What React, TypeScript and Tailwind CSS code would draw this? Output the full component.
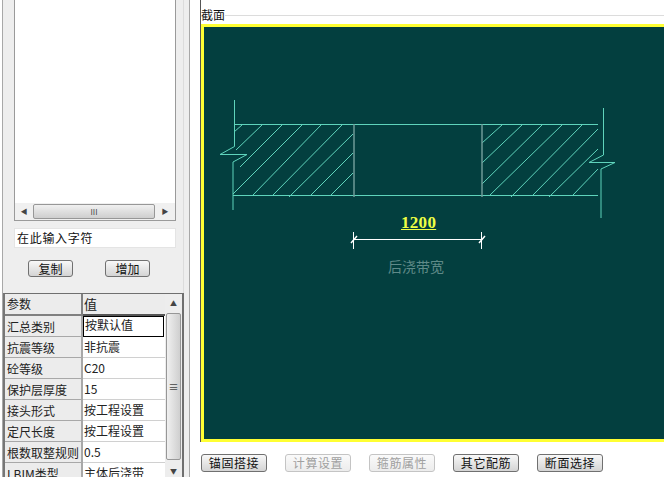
const font = "font-['Noto_Sans_CJK_SC','Liberation_Sans',sans-serif]";

const rows = [
  ["汇总类别", "按默认值"],
  ["抗震等级", "非抗震"],
  ["砼等级", "C20"],
  ["保护层厚度", "15"],
  ["接头形式", "按工程设置"],
  ["定尺长度", "按工程设置"],
  ["根数取整规则", "0.5"],
  ["LBIM类型", "主体后浇带"],
];

const teal = "#5fd4bc";

function Btn({ label, off, small }: { label: string; off?: boolean; small?: boolean }) {
  return (
    <button
      className={`shrink-0 rounded-[3px] border text-[12px] leading-none bg-gradient-to-b ${
        small ? "w-[45px] h-[17px]" : "w-[66px] h-[18px] tracking-[0.6px]"
      } ${off ? "border-[#c4c4c4] text-[#a0a0a0] from-[#fafafa] to-[#ececec]" : "border-[#707070] text-[#111] from-[#f8f8f8] to-[#d4d4d4]"}`}
    >
      {label}
    </button>
  );
}

function Section() {
  // hatching, left and right halves of the slab
  const hatch = [
    [234, 132, 242, 125], [236, 150, 262, 125], [240, 167, 282, 125], [233, 194, 302, 125],
    [253, 195, 321, 125], [273, 195, 342, 125], [289, 197, 353, 134], [311, 195, 353, 153], [331, 195, 353, 173],
    [482, 143, 502, 125], [482, 163, 522, 125], [482, 184, 542, 125], [490, 195, 562, 125],
    [511, 197, 582, 125], [533, 195, 598, 129], [549, 197, 598, 149], [573, 195, 598, 169],
  ];
  return (
    <svg viewBox="0 0 664 477" className="absolute left-[-204px] top-[-27px] w-[664px] h-[477px]" fill="none">
      <g stroke={teal} strokeWidth="1">
        <path d="M234.500 100V146.500L220 154.500H247L233 162V210" />
        <path d="M234 124.500H598M233 195.500H598" />
        <path d="M603.500 108V155L589 162.500H615L601 169V218" />
      </g>
      <g stroke={teal} strokeWidth="1">
        {hatch.map(([a, b, c, d]) => (
          <line key={`${a}-${b}`} x1={a} y1={b} x2={c} y2={d} />
        ))}
      </g>
      <path d="M354 124V197M482 124V197" stroke="#6f9a98" strokeWidth="1.500" />
      <g stroke="#fff" strokeWidth="1">
        <path d="M353 239.500H481M353.500 232V249M481.500 232V249" />
        <path d="M351 243L357 236M479 243L485 236" strokeWidth="1.500" />
      </g>
    </svg>
  );
}

export default function App() {
  return (
    <div className={`w-[664px] h-[477px] overflow-hidden flex bg-white ${font}`}>
      <div className="ml-[2px] w-[188px] h-[477px] shrink-0 bg-[#eeeeee] border-x border-[#a8a8a8] flex flex-col overflow-hidden">
        <div className="w-[181px] h-[293px] shrink-0 border-r border-[#dcdcdc] flex flex-col">
          <div className="ml-[11px] w-[162px] h-[221px] shrink-0 bg-white border-x border-b border-[#9a9a9a] flex flex-col justify-end">
            <div className="h-[17px] bg-[#f0f0f0] flex items-center text-[#444] text-[7px]">
              <span className="w-[18px] text-center">◀</span>
              <div className="w-[122px] h-[15px] rounded-[2px] border border-[#979797] bg-gradient-to-b from-[#f0f0f0] to-[#cfcfcf] flex items-center justify-center text-[8px] leading-none">
                III
              </div>
              <span className="w-[20px] text-center">▶</span>
            </div>
          </div>
          <div className="ml-[11px] mt-[7px] w-[162px] h-[20px] shrink-0 bg-white border border-[#e4e4e4] text-[12px] tracking-[0.7px] leading-[18px] pl-[2px] text-[#111]">
            在此输入字符
          </div>
          <div className="mt-[12px] flex gap-[32px] pl-[25px]">
            <Btn label="复制" small />
            <Btn label="增加" small />
          </div>
        </div>
        <div className="w-[181px] h-[184px] shrink-0 border-x-2 border-t border-[#6f6f6f] border-l-[#777] flex bg-white overflow-hidden">
          <div className="w-[160px] text-[12px] text-[#222]">
            <div className="h-[22px] flex bg-[#ececec]">
              <div className="w-[78px] pl-[2px] leading-[20px] border-r-2 border-b-2 border-[#808080]">参数</div>
              <div className="w-[82px] pl-[1px] text-[13px] leading-[20px] border-b-2 border-[#555]">值</div>
            </div>
            {rows.map(([k, v], i) => (
              <div key={k} className="h-[21px] flex">
                <div className="w-[78px] shrink-0 pl-[2px] leading-[21px] whitespace-nowrap bg-[#ececec] border-r-2 border-b border-[#a8a8a8]">{k}</div>
                <div className={`flex-1 pl-[1px] ${i === 0 ? "leading-[16px] border-[1.5px] border-black mr-[1px]" : "leading-[20px] border-b border-[#d0d0d0]"}`}>{v}</div>
              </div>
            ))}
          </div>
          <div className="w-[17px] bg-[#ededed] flex flex-col items-center text-[7px] text-[#444]">
            <span className="h-[19px] leading-[19px]">▲</span>
            <div className="w-[15px] h-[147px] shrink-0 rounded-[2px] border border-[#979797] bg-gradient-to-r from-[#f0f0f0] to-[#cfcfcf] flex items-center justify-center text-[10px]">≡</div>
            <span className="mt-[4px] h-[14px] leading-[14px]">▼</span>
          </div>
        </div>
      </div>
      <div className="w-[10px] shrink-0" />
      <div className="flex-1 min-w-0 flex flex-col">
        <div className="h-[24px] shrink-0 relative border-l border-[#555]">
          <span className="absolute left-0 top-[7px] text-[12px] leading-[15px] bg-white text-[#111] z-10">截面</span>
          <div className="absolute left-0 right-0 top-[15px] border-t border-[#dcdcdc]" />
        </div>
        <div className="h-[418px] shrink-0 border-l border-[#555]">
          <div className="h-[418px] border-y-[3px] border-l-[3px] border-[#ffff33] relative overflow-hidden bg-[#033f3f]">
            <Section />
            <span className="absolute left-[197px] top-[186px] text-[17px] tracking-[0.3px] leading-[20px] font-bold underline text-[#eeff44] font-['Liberation_Serif',serif]">1200</span>
            <span className="absolute left-[184px] top-[230px] text-[14px] leading-[18px] text-[#5f8a88]">后浇带宽</span>
          </div>
        </div>
        <div className="flex gap-[18px] mt-[12px] pl-[1px]">
          <Btn label="锚固搭接" />
          <Btn label="计算设置" off />
          <Btn label="箍筋属性" off />
          <Btn label="其它配筋" />
          <Btn label="断面选择" />
        </div>
      </div>
    </div>
  );
}
